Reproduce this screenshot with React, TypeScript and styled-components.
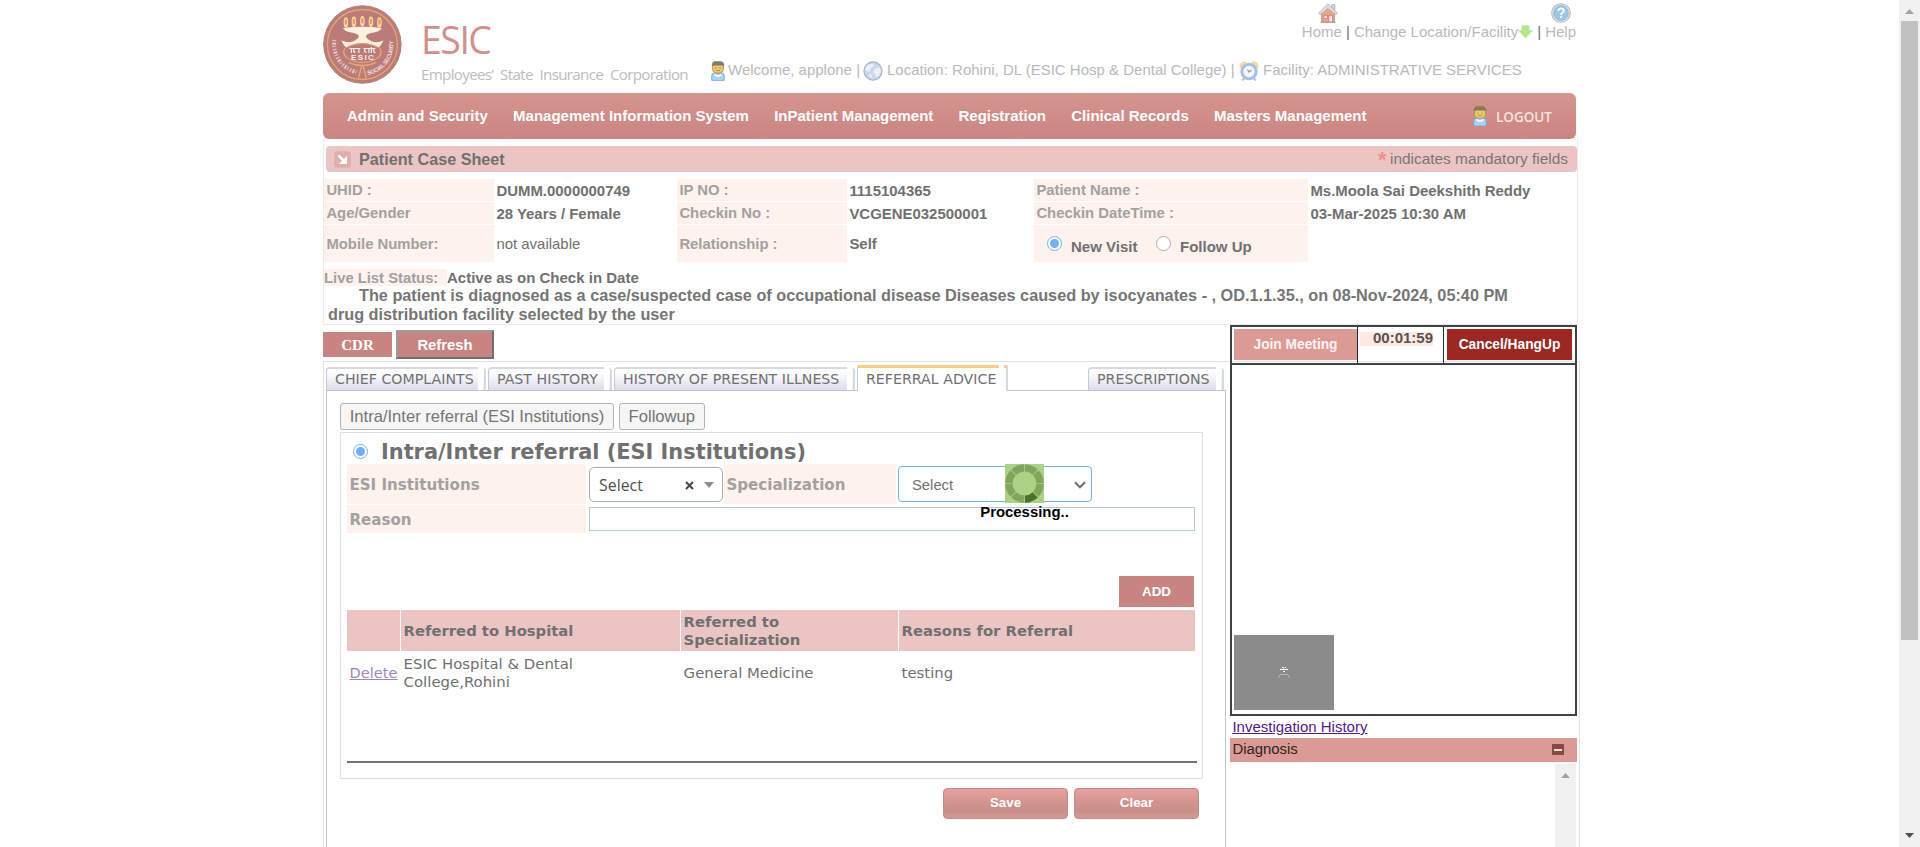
import React from 'react';
import styled, { createGlobalStyle, css } from 'styled-components';

const arial = '"Liberation Sans", Arial, sans-serif';
const verdana = '"DejaVu Sans", Verdana, sans-serif';
const humanist = '"Open Sans", "Noto Sans", sans-serif';

const GlobalStyle = createGlobalStyle`
  *, *::before, *::after { box-sizing: border-box; }
  body { margin: 0; background: #fff; font: 15px/18px ${arial}; color: #707070; overflow: hidden; }
  button, input { font: inherit; margin: 0; }
  svg { display: block; flex: none; }
`;

const Viewport = styled.div`
  display: flex;
  justify-content: space-between;
  height: 847px;
  overflow: hidden;
`;

const Page = styled.div`
  position: relative;
  width: 1257px;
  height: 847px;
  margin-left: 323px;
`;

/* ---------- Header ---------- */

const Header = styled.header`
  display: flex;
  width: 1253px;
  height: 93px;
  padding-top: 3px;
`;

const LogoBox = styled.div`
  width: 98px;
  padding-top: 1px;
`;

const Brand = styled.div`
  width: 290px;
  padding-top: 14px;
  font-family: ${humanist};
  white-space: nowrap;
`;

const BrandName = styled.div`
  font-size: 37.5px;
  line-height: 46px;
  letter-spacing: -1.5px;
  color: #d28f8c;
`;

const BrandTagline = styled.div`
  padding-top: 1px;
  font-size: 15.2px;
  line-height: 20px;
  letter-spacing: -0.7px;
  word-spacing: 3.6px;
  color: #bcbcbc;
`;

const HeaderInfo = styled.div`
  flex: 1;
  display: flex;
  flex-direction: column;
  justify-content: space-between;
  color: #b9b9b9;
  white-space: nowrap;
`;

const TopLinks = styled.nav`
  display: flex;
  justify-content: flex-end;
  align-items: flex-end;
  height: 37px;
`;

const TopLink = styled.a<{ $indent?: number }>`
  display: flex;
  flex-direction: column;
  align-items: flex-start;
  line-height: 17px;

  & > svg { margin-left: ${(p) => p.$indent ?? 0}px; }
`;

const LinkWithArrow = styled.a`
  display: flex;
  align-items: center;
  line-height: 17px;
`;

const Pipe = styled.span<{ $tone: string }>`
  width: 12px;
  text-align: center;
  line-height: 17px;
  color: ${(p) => p.$tone};
`;

const UserInfo = styled.div`
  display: flex;
  align-items: center;
  height: 22px;
  margin-bottom: 11px;
`;

const InfoText = styled.span<{ $width: number; $pad: number }>`
  width: ${(p) => p.$width}px;
  padding-left: ${(p) => p.$pad}px;
  line-height: 18px;
  margin-top: -3px;
`;

const MenuBar = styled.nav`
  display: flex;
  align-items: center;
  width: 1253px;
  height: 46px;
  padding: 0 24px 0 24px;
  border-radius: 6px;
  background: linear-gradient(#d6948f, #c98581);
  color: #fff;
  font-weight: bold;
`;

const MenuItem = styled.a`
  margin-right: 25.2px;
  white-space: nowrap;
`;

const Logout = styled.a`
  display: flex;
  align-items: center;
  gap: 9px;
  margin-left: auto;
  font: 600 13.5px/18px ${humanist};
  color: #f6e2e0;

  & > span { padding-top: 1px; }
`;

/* ---------- Patient summary ---------- */

const SummaryBox = styled.section`
  width: 1255px;
  height: 186px;
  padding-top: 7px;
  border: 1px solid #ebebeb;
  border-top-width: 0;
`;

const TitleBar = styled.div`
  display: flex;
  align-items: center;
  height: 26px;
  margin: 0 0 7px 2px;
  padding: 0 9px 0 8px;
  border-radius: 4px;
  background: #ebc5c4;
`;

const Title = styled.h1`
  margin: 0 0 0 8px;
  font-size: 16.2px;
  line-height: 18px;
`;

const Mandatory = styled.span`
  display: flex;
  margin-left: auto;
  font-size: 15.4px;
  color: #7c7473;
`;

const Star = styled.span`
  width: 12px;
  font: bold 22px/20px ${arial};
  height: 18px;
  color: #f08f88;
`;

const DetailGrid = styled.div`
  display: grid;
  grid-template-columns: 170px 183px 170px 187px 274px 1fr;
  grid-template-rows: 22px 22px 37px;
  row-gap: 1px;
  font-weight: bold;
  white-space: nowrap;
`;

const Label = styled.div`
  display: flex;
  align-items: center;
  padding-left: 2.4px;
  background: #fdf2ee;
  color: #a3a09f;
  font-size: 14.85px;
`;

const Value = styled.div<{ $plain?: boolean }>`
  display: flex;
  align-items: center;
  padding: 1px 0 0 2.4px;
  font-size: 14.95px;
  ${(p) => p.$plain && 'font-weight: normal;'}
`;

const VisitChoice = styled(Label)`
  padding-left: 13px;
  color: #707070;
`;

const VisitText = styled.span<{ $width: number }>`
  width: ${(p) => p.$width}px;
  padding: 6px 0 0 9px;
  font-size: 15px;
`;

const LiveStatus = styled.div`
  display: flex;
  height: 17px;
  margin-top: 7px;
  font-weight: bold;
  line-height: 17px;
`;

const LiveLabel = styled.span`
  width: 123px;
  padding-top: 1px;
  background: #fdf2ee;
  color: #a3a09f;
  font-size: 14.8px;
  line-height: 16px;
`;

const Diagnosis = styled.p`
  margin: 0;
  padding-left: 4px;
  text-indent: 31px;
  font: bold 16.25px/19px ${arial};
  white-space: nowrap;
  color: #757575;

  & > span { display: block; text-indent: 0; }
`;

/* ---------- Work area ---------- */

const Actions = styled.div`
  display: flex;
  align-items: center;
  gap: 4px;
  height: 36px;
  padding-top: 3px;
`;

const ActionButton = styled.button<{ $raised?: boolean }>`
  width: ${(p) => (p.$raised ? 98 : 69)}px;
  height: ${(p) => (p.$raised ? 29 : 25)}px;
  padding: 0;
  border: 0 solid;
  background: #c88481;
  color: #fff;
  font-weight: bold;
  ${(p) =>
    p.$raised
      ? css`
          border-width: 2px;
          border-color: #9b9b9b #6f6f6f #6f6f6f #9b9b9b;
          font-size: 14.8px;
        `
      : css`
          font: bold 15px/24px "Liberation Serif", serif;
        `}
`;

const TabBox = styled.section`
  width: 1257px;
  height: 500px;
  padding: 2px 0 0 2px;
  border: 1px solid #e1e1e1;
`;

const TabStrip = styled.div`
  display: flex;
  align-items: flex-end;
  width: 900px;
  height: 26px;
`;

const Tab = styled.div<{ $active?: boolean; $width: number; $gap: number }>`
  display: flex;
  align-items: flex-end;
  gap: 5px;
  position: relative;
  margin-left: ${(p) => p.$gap}px;
  margin-bottom: ${(p) => (p.$active ? -1 : 0)}px;
  background: #fff;
  font: 14.2px/22px ${verdana};
  white-space: nowrap;

  & > span {
    width: ${(p) => p.$width}px;
    height: ${(p) => (p.$active ? 26 : 23)}px;
    padding-left: 8px;
    border-left: 1px solid #c3ccd2;
    border-top: 2px solid #d3dbe1;
    border-radius: 4px 0 0 0;
    background: linear-gradient(#fdfdff 20%, #dcdcec);
    line-height: 20px;
    ${(p) => p.$active && 'background:#fff; border-top: 3px solid #f8ce82; border-radius: 2px 0 0 0; line-height: 22px;'}
  }

  &::after {
    content: '';
    width: 3px;
    height: ${(p) => (p.$active ? 25 : 22)}px;
    border-right: 2px solid #d3dbe1;
    border-radius: 0 5px 0 0;
    background: linear-gradient(#fff, #ececf5);
    ${(p) => p.$active && 'width: 4px; height: 26px; background:#fff; border-top: 3px solid #f8ce82; border-radius: 0 2px 0 0;'}
  }
`;

const TabBody = styled.div`
  width: 900px;
  height: 470px;
  padding: 12px 0 0 13px;
  border: 1px solid #bfc4c4;
`;

const SubTabs = styled.div`
  display: flex;
  gap: 5px;
  height: 27px;
  margin-bottom: 2px;
`;

const SubTab = styled.button`
  padding: 0 8.700px;
  border: 1px solid #b3b3b3;
  border-radius: 3px;
  background: #f6f6f6;
  color: #757575;
  font-size: 16.6px;
  line-height: 24px;
  white-space: nowrap;
`;

const Panel = styled.div`
  position: relative;
  width: 863px;
  height: 347px;
  padding: 0 5px 0 6px;
  border: 1px solid #e0e0e0;
`;

const PanelHead = styled.div`
  display: flex;
  align-items: center;
  gap: 13px;
  height: 31px;
  padding: 5px 0 0 6px;
  font: bold 20.88px/26px ${verdana};
  white-space: nowrap;

  & > b { padding-top: 2px; }
`;

const FormRow = styled.div<{ $height: number }>`
  display: flex;
  align-items: center;
  height: ${(p) => p.$height}px;
  margin-bottom: 1px;
`;

const FormLabel = styled(Label)<{ $width: number }>`
  width: ${(p) => p.$width}px;
  height: 100%;
  padding-top: 1px;
  font: bold 15.1px/18px ${verdana};
`;

const Combo = styled.div`
  display: flex;
  align-items: center;
  width: 134px;
  height: 35px;
  margin: 0 1px 0 3px;
  padding: 2px 8px 0 9px;
  border: 1px solid #aaa;
  border-radius: 5px;
  font: 15.9px/18px ${humanist};
  color: #505050;

  & > svg:first-of-type { margin: 0 10px 0 auto; }
`;

const SelectBox = styled.div`
  display: flex;
  align-items: center;
  justify-content: space-between;
  width: 194px;
  height: 36px;
  margin-left: 2px;
  padding: 1px 5px 0 13px;
  border: 1px solid #74b2dc;
  border-radius: 4px;
  font-size: 14.8px;
`;

const ReasonInput = styled.input`
  width: 606px;
  height: 24px;
  margin-left: 3px;
  padding: 0 4px;
  border: 1px solid #b3c6da;
  outline: none;
`;

const AddButton = styled.button`
  display: block;
  width: 75px;
  height: 31px;
  margin: 43px 3px 3px auto;
  border: 0;
  background: #c88481;
  color: #fff;
  font: bold 13.4px/28px ${arial};
`;

const Table = styled.div`
  display: grid;
  grid-template-columns: 53px 279px 217px 296px;
  grid-template-rows: 41px 44px;
  column-gap: 1px;
  font: 14.9px/18px ${verdana};
`;

const Th = styled.div`
  display: flex;
  align-items: center;
  padding-left: 2.6px;
  background: #ebc5c4;
  font-size: 14.8px;
  font-weight: bold;
`;

const Td = styled.div`
  display: flex;
  align-items: center;
  padding-left: 2.6px;
`;

const DeleteLink = styled.a`
  color: #a582bf;
  font-size: 14.6px;
  text-decoration: underline;
`;

const Rule = styled.div`
  width: 850px;
  height: 2px;
  margin-top: 66px;
  background: #727472;
`;

const FooterButtons = styled.div`
  display: flex;
  justify-content: flex-end;
  gap: 6px;
  width: 859px;
  margin-top: 9px;
`;

const GlossButton = styled.button`
  width: 125px;
  height: 31px;
  padding: 0 0 1px;
  border: 1px solid #c0908d;
  border-radius: 4px;
  background: linear-gradient(#e8a3a0, #d3938d 45%, #c6908a 75%, #d39b96);
  box-shadow: inset 0 0 2px #dc9490;
  color: #fff;
  font: bold 13.3px/18px ${arial};
`;

/* ---------- Processing indicator ---------- */

const Processing = styled.div`
  position: absolute;
  left: 657px;
  top: 464px;
  width: 89px;
  display: flex;
  flex-direction: column;
  align-items: center;
  color: #000;
  font-weight: bold;
  font-size: 14.9px;
`;

/* ---------- Teleconsultation column ---------- */

const CallColumn = styled.aside`
  position: absolute;
  left: 907px;
  top: 325px;
  width: 347px;
`;

const CallFrame = styled.div`
  height: 391px;
  display: flex;
  flex-direction: column;
  border: 2px solid #404242;
`;

const CallControls = styled.div`
  display: flex;
  height: 38px;
  border-bottom: 2px solid #404242;
`;

const CallCell = styled.div<{ $width?: number }>`
  ${(p) => (p.$width ? `width: ${p.$width}px; border-right: 1px solid #2b2d2d;` : 'flex: 1;')}
  padding: 2px 0 0 2px;
`;

const CallButton = styled.button<{ $danger?: boolean }>`
  display: block;
  width: ${(p) => (p.$danger ? 125 : 123)}px;
  height: 31px;
  padding: 0;
  margin-left: ${(p) => (p.$danger ? 1 : 0)}px;
  border: 0;
  background: ${(p) => (p.$danger ? '#9c2723' : '#dc9a94')};
  color: ${(p) => (p.$danger ? '#fff' : '#fbf3f2')};
  font: bold 13.75px/18px ${arial};
`;

const Timer = styled.span`
  display: block;
  width: 73px;
  height: 14px;
  margin: 3px 0 0 0;
  background: #fde9e2;
  color: #5a5050;
  font-weight: bold;
  line-height: 11px;
  text-align: right;
`;

const SelfView = styled.div`
  display: flex;
  align-items: center;
  justify-content: center;
  width: 100px;
  height: 75px;
  margin: auto 0 4px 2px;
  background: #8b8b8c;
`;

const HistoryLink = styled.a`
  display: block;
  height: 22px;
  padding-left: 2.4px;
  color: #551a8b;
  line-height: 22px;
  text-decoration: underline;
`;

const AccordionHead = styled.div`
  display: flex;
  justify-content: space-between;
  height: 24px;
  padding: 0 13px 0 2.4px;
  background: #dc9a94;
  color: #2e2322;
  font-size: 14.9px;
  line-height: 22px;
`;

const Collapse = styled.span`
  display: flex;
  align-items: center;
  justify-content: center;
  width: 12px;
  height: 11px;
  margin-top: 6px;
  background: #8a4843;

  &::before { content: ''; width: 8px; height: 2px; background: #efdcda; }
`;

const InnerScroll = styled.div`
  width: 21px;
  height: 83px;
  margin: 2px 1px 0 auto;
  padding: 9px 0 0 6px;
  background: #f1f1f1;
`;

/* ---------- Page scrollbar ---------- */

const ScrollBar = styled.div`
  display: flex;
  flex-direction: column;
  align-items: center;
  width: 21px;
  padding: 9px 0;
  background: #f1f1f1;
`;

const Thumb = styled.div`
  width: 17px;
  height: 619px;
  margin: 7px 0 auto;
  background: #c1c1c1;
`;

/* ---------- Drawings ---------- */

const RadioRing = styled.span<{ $on?: boolean }>`
  display: inline-flex;
  flex: none;
  width: 15px;
  height: 15px;
  padding: 2px;
  border: 1px solid ${(p) => (p.$on ? '#72b0ff' : '#b0b0b0')};
  border-radius: 50%;
  background: #fff;

  &::before {
    content: '';
    flex: 1;
    border-radius: 50%;
    background: ${(p) => (p.$on ? '#72b0ff' : '#fff')};
  }
`;

const Triangle = ({ color, down, w = 9, h = 5 }: { color: string; down?: boolean; w?: number; h?: number }) => (
  <svg width={w} height={h} viewBox="0 0 10 5" preserveAspectRatio="none">
    <path d={down ? 'M0 0h10L5 5z' : 'M0 5h10L5 0z'} fill={color} />
  </svg>
);

const flames = [
  { x: 23.5, y: 18.5 },
  { x: 31.5, y: 17.8 },
  { x: 40, y: 17.2 },
  { x: 48.5, y: 17.8 },
  { x: 57, y: 18.5 },
];

const Emblem = () => (
  <svg width="80" height="80" viewBox="0.6 0 80 80">
    <defs>
      <path id="rimRight" d="M44.500 71A30.500 30.500 0 0 0 70 33" />
    </defs>
    <circle cx="40" cy="40.500" r="39.200" fill="#bb7b78" />
    <circle cx="40" cy="40.500" r="38.300" fill="none" stroke="#b48682" strokeWidth="1" />
    <circle cx="40" cy="40.500" r="35" fill="none" stroke="#e2a673" strokeWidth="1.300" />
    {flames.map(({ x, y }) => (
      <g key={x}>
        <ellipse cx={x} cy={y} rx="2.300" ry="5.200" fill="#f8d9a0" />
        <ellipse cx={x} cy={y - 0.5} rx="1.300" ry="3" fill="#ee9a60" />
      </g>
    ))}
    <path d="M20.500 24q19.500-2.500 39 0q-2 3.500-8 4.500q-7 1-8 3.500q0 2.500 6 5.500q5 2 11.500-1q-1.500 4-4.500 7q-16.500-9-33 0q-3-3-4.500-7q6.500 3 11.500 1q6-3 6-5.500q-1-2.500-8-3.500q-6-1-8-4.500z" fill="#fbf1dd" />
    <path d="M22.500 44q-3.500 6 3 10.500q14.500 8 29 0q6.500-4.500 3-10.500" fill="none" stroke="#e2a673" strokeWidth="1.400" />
    <path d="M24 43.500q16-8 32 0" fill="none" stroke="#e2a673" strokeWidth=".9" />
    <path d="M27 44.500h11M41 44.500h12M29 44.500v4.500M32 44.500q-2 3 1 4M36.500 44.500v4.500M43 44.500q-2 3 1 4M46.500 44.500v4.500M49 43v6M52 45q-2 2 1 4" stroke="#f8ecea" strokeWidth="1.200" fill="none" />
    <text x="40" y="55.600" textAnchor="middle" fontFamily={arial} fontWeight="bold" fontSize="8" textLength="23" fill="#f8ecea">ESIC</text>
    <path d="M26 58.500q14 6 28 0M39.500 61L36 74.500M40.500 61L44 74.500" fill="none" stroke="#e2a673" strokeWidth="1.500" />
    <path d="M12 36A28.500 28.500 0 0 0 34 68" fill="none" stroke="#eed4cf" strokeWidth="4" strokeDasharray="1.300 1.400 2.200 1.200 1 1.800" opacity=".8" />
    <text fontFamily={arial} fontWeight="bold" fontSize="5.800" fill="#f3dedb">
      <textPath href="#rimRight" startOffset="1" textLength="47">SOCIAL SECURITY</textPath>
    </text>
  </svg>
);

const PersonIcon = () => (
  <svg width="14" height="20" viewBox="0 0 14 20">
    <path d="M.800 19v-4.500q0-2.500 3-2.500h6.400q3 0 3 2.500V19q0 1-1 1H1.800q-1 0-1-1z" fill="#a9d2fb" stroke="#6aa3e2" strokeWidth=".9" />
    <path d="M3.500 13.500q3.500 3.500 7 0" fill="none" stroke="#fff" strokeWidth="1.600" />
    <rect x="1.500" y="2" width="11" height="10" rx="4" fill="#ecc869" stroke="#b3924a" strokeWidth=".8" />
    <path d="M.8 5.500Q.5 0 5 .300h4.500Q13.500.500 13.200 5.500L11.500 4.500h-9z" fill="#857a62" />
    <path d="M4 7h1.500M8.500 7H10M5 9.500h4" stroke="#a88a45" strokeWidth=".8" />
  </svg>
);

const GlobeIcon = () => (
  <svg width="20" height="20" viewBox="0 0 20 20">
    <circle cx="10" cy="10" r="9.100" fill="#c9d7ec" stroke="#a9b0bb" strokeWidth="1.100" />
    <path d="M4 4.500q3-2.500 6-1.500l1 2-3 2-1 3-2 1-2.500-2q0-3 1.500-4.500zM12 8l4-2 2 4-2 5-3 1-1-3-2-2zM6 13l3 1 .500 3-3-1z" fill="#e9f0f9" />
  </svg>
);

const ClockIcon = () => (
  <svg width="20" height="20" viewBox="0 0 20 20">
    <path d="M1 6Q.500 1 6 .800L8 3 3 7zM19 6q.500-5-5-5.200L12 3l5 4z" fill="#f8dc96" stroke="#ecc878" strokeWidth=".6" />
    <path d="M3 19.300L5.500 17M17 19.300L14.500 17" stroke="#b9b9b9" strokeWidth="1.800" />
    <circle cx="10" cy="10.500" r="7.200" fill="#f3f7fd" stroke="#a5c1ea" strokeWidth="3" />
    <path d="M8.500 8.500l1.500 2.500 2.500-2" fill="none" stroke="#9a9a9a" strokeWidth="1.200" />
  </svg>
);

const HomeIcon = () => (
  <svg width="20" height="20" viewBox="0 0 20 20">
    <path d="M13.500 1.500h3.500v6l-3.500-3z" fill="#d2d2d2" stroke="#aaa" strokeWidth=".6" />
    <path d="M3.500 10L10 4l6.500 6v9h-13z" fill="#eba090" stroke="#b98a80" strokeWidth=".7" />
    <path d="M9.800.800L.500 10.200l1.600 1.600L9.800 5.600l8 6.200 1.700-1.600z" fill="#dedede" stroke="#a6a6a6" strokeWidth=".7" />
    <path d="M6 12.500h3.500v3H6zM11 12.500h3.500v6.500H11z" fill="#f8ebe6" stroke="#c9786a" strokeWidth=".7" />
    <path d="M2.500 19.400h15" stroke="#a9a29c" strokeWidth="1" />
  </svg>
);

const HelpIcon = () => (
  <svg width="20" height="20" viewBox="0 0 20 20">
    <circle cx="10" cy="10" r="9.300" fill="#e6eaee" stroke="#b4b9be" strokeWidth="1.100" />
    <circle cx="10" cy="10" r="7.400" fill="#9cc5ea" stroke="#8ab2da" strokeWidth=".8" />
    <path d="M7.300 8q.2-2.700 2.800-2.700T12.800 7.700q0 1.300-1.500 2.100-1.200.7-1.200 2.100" fill="none" stroke="#fff" strokeWidth="1.800" />
    <circle cx="10.100" cy="14.200" r="1.100" fill="#fff" />
  </svg>
);

const GreenArrow = () => (
  <svg width="15" height="14" viewBox="0 0 15 14">
    <path d="M4 .500h7v5h3.500l-7 7.500-7-7.500H4z" fill="#b4e884" stroke="#c4e3a8" strokeWidth=".8" />
  </svg>
);

const TitleIcon = () => (
  <svg width="17" height="17" viewBox="0 0 17 17">
    <rect x=".2" y=".2" width="16.600" height="16.600" rx="3" fill="#dcafac" />
    <path d="M4.500 4.500l6.500 6.500" stroke="#fff" strokeWidth="2.600" />
    <path d="M13 5v8H5z" fill="#fff" />
  </svg>
);

const Spinner = () => (
  <svg width="39" height="39" viewBox="0 0 39 39">
    <rect width="39" height="39" fill="#abd386" />
    {Array.from({ length: 8 }, (_, i) => (
      <circle
        key={i}
        cx="19.500"
        cy="19.500"
        r="15.600"
        fill="none"
        stroke={i === 1 ? '#4d722f' : '#80a65e'}
        strokeWidth="7.400"
        strokeDasharray="11.350 200"
        transform={`rotate(${i * 45 + 1.500} 19.500 19.500)`}
      />
    ))}
  </svg>
);

const CameraOff = () => (
  <svg width="12" height="12" viewBox="0 0 12 12" shapeRendering="crispEdges">
    <path d="M4 .500h2M7 .500h1M2 2.500h8M5 4.500h2" stroke="#fff" />
    <path d="M5 1.500h2M2 7.500h8M1.500 8v2M10.500 8v2M.500 10v1M11.500 10v1" stroke="#b4b4b4" />
  </svg>
);

const menu = [
  'Admin and Security',
  'Management Information System',
  'InPatient Management',
  'Registration',
  'Clinical Records',
  'Masters Management',
];

const tabs = [
  { name: 'CHIEF COMPLAINTS', width: 152, gap: 0 },
  { name: 'PAST HISTORY', width: 116, gap: 2 },
  { name: 'HISTORY OF PRESENT ILLNESS', width: 233, gap: 2 },
  { name: 'REFERRAL ADVICE', width: 142, gap: 2, active: true },
  { name: 'PRESCRIPTIONS', width: 128, gap: 80 },
];

export default function App() {
  return (
    <Viewport>
      <GlobalStyle />
      <Page>
        <Header>
          <LogoBox><Emblem /></LogoBox>
          <Brand>
            <BrandName>ESIC</BrandName>
            <BrandTagline>Employees’ State Insurance Corporation</BrandTagline>
          </Brand>
          <HeaderInfo>
            <TopLinks>
              <TopLink $indent={16}><HomeIcon />Home</TopLink>
              <Pipe $tone="#707070">|</Pipe>
              <LinkWithArrow>Change Location/Facility<GreenArrow /></LinkWithArrow>
              <Pipe $tone="#707070">|</Pipe>
              <TopLink $indent={6}><HelpIcon />Help</TopLink>
            </TopLinks>
            <UserInfo>
              <PersonIcon />
              <InfoText $width={138} $pad={3}>Welcome, applone |</InfoText>
              <GlobeIcon />
              <InfoText $width={356} $pad={4}>Location: Rohini, DL (ESIC Hosp &amp; Dental College) |</InfoText>
              <ClockIcon />
              <InfoText $width={264} $pad={4}>Facility: ADMINISTRATIVE SERVICES</InfoText>
            </UserInfo>
          </HeaderInfo>
        </Header>

        <MenuBar>
          {menu.map((item) => <MenuItem key={item}>{item}</MenuItem>)}
          <Logout><PersonIcon /><span>LOGOUT</span></Logout>
        </MenuBar>

        <SummaryBox>
          <TitleBar>
            <TitleIcon />
            <Title>Patient Case Sheet</Title>
            <Mandatory><Star>*</Star>indicates mandatory fields</Mandatory>
          </TitleBar>
          <DetailGrid>
            <Label>UHID :</Label><Value>DUMM.0000000749</Value>
            <Label>IP NO :</Label><Value>1115104365</Value>
            <Label>Patient Name :</Label><Value>Ms.Moola Sai Deekshith Reddy</Value>
            <Label>Age/Gender</Label><Value>28 Years / Female</Value>
            <Label>Checkin No :</Label><Value>VCGENE032500001</Value>
            <Label>Checkin DateTime :</Label><Value>03-Mar-2025 10:30 AM</Value>
            <Label>Mobile Number:</Label><Value $plain>not available</Value>
            <Label>Relationship :</Label><Value>Self</Value>
            <VisitChoice>
              <RadioRing $on /><VisitText $width={94}>New Visit</VisitText>
              <RadioRing /><VisitText $width={90}>Follow Up</VisitText>
            </VisitChoice>
          </DetailGrid>
          <LiveStatus><LiveLabel>Live List Status:</LiveLabel>Active as on Check in Date</LiveStatus>
          <Diagnosis>
            The patient is diagnosed as a case/suspected case of occupational disease Diseases caused by isocyanates - , OD.1.1.35., on 08-Nov-2024, 05:40 PM
            <span>drug distribution facility selected by the user</span>
          </Diagnosis>
        </SummaryBox>

        <Actions>
          <ActionButton>CDR</ActionButton>
          <ActionButton $raised>Refresh</ActionButton>
        </Actions>

        <TabBox>
          <TabStrip>
            {tabs.map((t) => (
              <Tab key={t.name} $width={t.width} $gap={t.gap} $active={t.active}><span>{t.name}</span></Tab>
            ))}
          </TabStrip>
          <TabBody>
            <SubTabs>
              <SubTab>Intra/Inter referral (ESI Institutions)</SubTab>
              <SubTab>Followup</SubTab>
            </SubTabs>
            <Panel>
              <PanelHead><RadioRing $on /><b>Intra/Inter referral (ESI Institutions)</b></PanelHead>
              <FormRow $height={40}>
                <FormLabel $width={239}>ESI Institutions</FormLabel>
                <Combo>
                  Select
                  <svg width="9" height="9" viewBox="0 0 9 9"><path d="M1 1l7 7M8 1L1 8" stroke="#444" strokeWidth="1.900" /></svg>
                  <Triangle color="#8f8f8f" down w={10} h={6} />
                </Combo>
                <FormLabel $width={172}>Specialization</FormLabel>
                <SelectBox>
                  Select
                  <svg width="12" height="8" viewBox="0 0 12 8"><path d="M1 1.300l5 5 5-5" fill="none" stroke="#707070" strokeWidth="2" /></svg>
                </SelectBox>
              </FormRow>
              <FormRow $height={28}>
                <FormLabel $width={239}>Reason</FormLabel>
                <ReasonInput />
              </FormRow>
              <AddButton>ADD</AddButton>
              <Table>
                <Th /><Th>Referred to Hospital</Th><Th>Referred to<br />Specialization</Th><Th>Reasons for Referral</Th>
                <Td><DeleteLink>Delete</DeleteLink></Td>
                <Td>ESIC Hospital &amp; Dental<br />College,Rohini</Td>
                <Td>General Medicine</Td>
                <Td>testing</Td>
              </Table>
              <Rule />
            </Panel>
            <FooterButtons>
              <GlossButton>Save</GlossButton>
              <GlossButton>Clear</GlossButton>
            </FooterButtons>
          </TabBody>
        </TabBox>

        <CallColumn>
          <CallFrame>
            <CallControls>
              <CallCell $width={126}><CallButton>Join Meeting</CallButton></CallCell>
              <CallCell $width={86}><Timer>00:01:59</Timer></CallCell>
              <CallCell><CallButton $danger>Cancel/HangUp</CallButton></CallCell>
            </CallControls>
            <SelfView><CameraOff /></SelfView>
          </CallFrame>
          <HistoryLink>Investigation History</HistoryLink>
          <AccordionHead>Diagnosis<Collapse /></AccordionHead>
          <InnerScroll><Triangle color="#a3a3a3" /></InnerScroll>
        </CallColumn>

        <Processing><Spinner />Processing..</Processing>
      </Page>

      <ScrollBar>
        <Triangle color="#a3a3a3" />
        <Thumb />
        <Triangle color="#505050" down />
      </ScrollBar>
    </Viewport>
  );
}
